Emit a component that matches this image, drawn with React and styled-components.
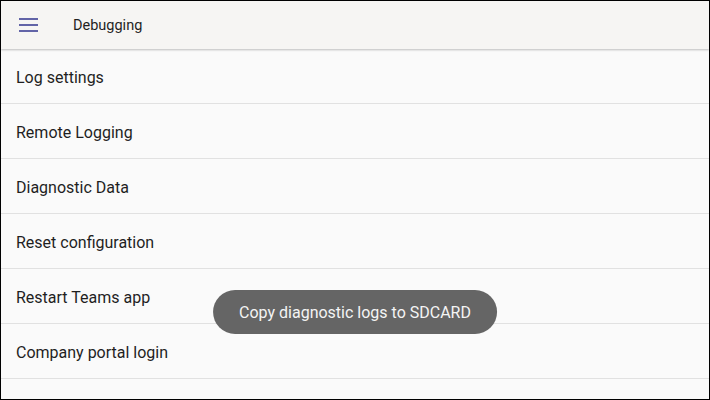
import React from 'react';
import styled, { createGlobalStyle } from 'styled-components';

const colors = {
  header: '#f6f5f3',
  list: '#fafafa',
  divider: '#e1e1e1',
  text: '#1f1f1f',
  purple: '#6264a7',
  toast: '#656565',
};

const GlobalStyle = createGlobalStyle`
  html, body {
    margin: 0;
    padding: 0;
  }
  body {
    font-family: Roboto, "Noto Sans", sans-serif;
  }
`;

const Screen = styled.div`
  position: relative;
  width: 710px;
  height: 400px;
  box-sizing: border-box;
  border: 1px solid #000;
  background-color: ${colors.list};
  overflow: hidden;
  display: flex;
  flex-direction: column;
`;

const Header = styled.header`
  height: 48px;
  flex-shrink: 0;
  display: flex;
  align-items: center;
  background-color: ${colors.header};
  box-shadow: 0 1px 2px rgba(0, 0, 0, 0.25);
  position: relative;
  z-index: 1;
`;

const MenuButton = styled.div`
  width: 19px;
  margin-left: 18px;
  display: flex;
  flex-direction: column;
  gap: 4px;
`;

const MenuLine = styled.span`
  display: block;
  height: 2px;
  background-color: ${colors.purple};
`;

const Title = styled.h1`
  margin: 0 0 0 35px;
  font-size: 14.5px;
  font-weight: 400;
  color: ${colors.text};
`;

const List = styled.ul`
  list-style: none;
  margin: 0;
  padding: 0;
`;

const Row = styled.li`
  box-sizing: border-box;
  height: 55px;
  border-bottom: 1px solid ${colors.divider};
  display: flex;
  align-items: center;
  padding: 3px 0 0 15px;
  font-size: 16px;
  color: ${colors.text};
`;

const Toast = styled.div`
  position: absolute;
  left: 50%;
  top: 289px;
  transform: translateX(-50%);
  height: 44px;
  padding: 0 26px;
  border-radius: 22px;
  background-color: ${colors.toast};
  color: #f4f4f4;
  font-size: 16px;
  display: flex;
  align-items: center;
  white-space: nowrap;
`;

const items = [
  'Log settings',
  'Remote Logging',
  'Diagnostic Data',
  'Reset configuration',
  'Restart Teams app',
  'Company portal login',
];

const App = () => {
  return (
    <>
      <GlobalStyle />
      <Screen>
        <Header>
          <MenuButton>
            <MenuLine />
            <MenuLine />
            <MenuLine />
          </MenuButton>
          <Title>Debugging</Title>
        </Header>
        <List>
          {items.map((item) => (
            <Row key={item}>{item}</Row>
          ))}
        </List>
        <Toast>Copy diagnostic logs to SDCARD</Toast>
      </Screen>
    </>
  );
};

export default App;
